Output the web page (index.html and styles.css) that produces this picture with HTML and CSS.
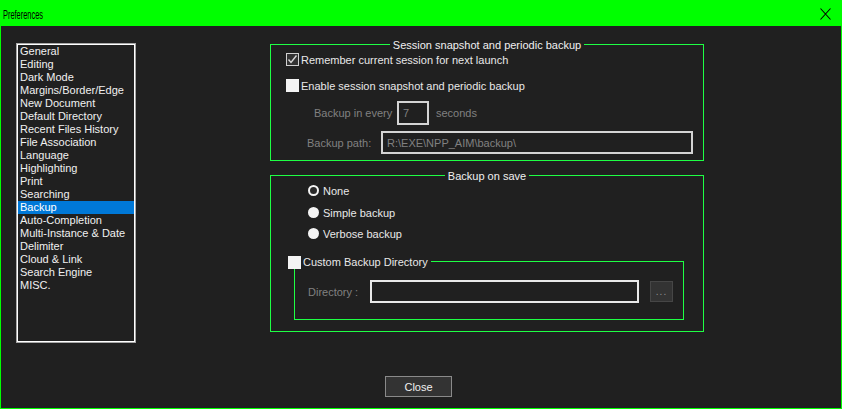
FILE: index.html
```html
<!DOCTYPE html>
<html>
<head>
<meta charset="utf-8">
<title>Preferences</title>
<link rel="stylesheet" href="styles.css">
</head>
<body>
<div class="window">
  <div class="titlebar">
    <span class="title">Preferences</span>
    <svg class="close-x" width="11" height="12" viewBox="0 0 11 12"><path d="M0.5 0.5 L10.5 11.5 M10.5 0.5 L0.5 11.5" stroke="#000" stroke-width="1.1" fill="none"/></svg>
  </div>
  <div class="body">
    <div class="main">
      <ul class="cats">
        <li>General</li>
        <li>Editing</li>
        <li>Dark Mode</li>
        <li>Margins/Border/Edge</li>
        <li>New Document</li>
        <li>Default Directory</li>
        <li>Recent Files History</li>
        <li>File Association</li>
        <li>Language</li>
        <li>Highlighting</li>
        <li>Print</li>
        <li>Searching</li>
        <li class="sel">Backup</li>
        <li>Auto-Completion</li>
        <li>Multi-Instance &amp; Date</li>
        <li>Delimiter</li>
        <li>Cloud &amp; Link</li>
        <li>Search Engine</li>
        <li>MISC.</li>
      </ul>
      <div class="panels">
        <section class="group g1">
          <div class="group-title"><span>Session snapshot and periodic backup</span></div>
          <div class="check-row r1"><span class="cb checked"><svg width="11" height="11" viewBox="0 0 11 11"><path d="M1.5 5.5 L4 8.5 L9.5 1.5" stroke="#d8d8d8" stroke-width="1.4" fill="none"/></svg></span><span>Remember current session for next launch</span></div>
          <div class="check-row r2"><span class="cb"></span><span>Enable session snapshot and periodic backup</span></div>
          <div class="field-row r3"><span class="dim lbl-every">Backup in every</span><span class="input num">7</span><span class="dim lbl-sec">seconds</span></div>
          <div class="field-row r4"><span class="dim lbl-path">Backup path:</span><span class="input path">R:\EXE\NPP_AIM\backup\</span></div>
        </section>
        <section class="group g2">
          <div class="group-title"><span>Backup on save</span></div>
          <div class="radio-row rr1"><span class="rb on"></span><span>None</span></div>
          <div class="radio-row rr2"><span class="rb"></span><span>Simple backup</span></div>
          <div class="radio-row rr3"><span class="rb"></span><span>Verbose backup</span></div>
          <div class="subgroup">
            <div class="sub-head"><span class="cb"></span><span class="sub-label">Custom Backup Directory</span><span class="sub-line"></span></div>
            <div class="field-row dir-row"><span class="dim lbl-dir">Directory :</span><span class="input dir"></span><span class="dots">...</span></div>
          </div>
        </section>
      </div>
    </div>
    <div class="footer"><button class="btn">Close</button></div>
  </div>
</div>
</body>
</html>
```
FILE: styles.css
```css
html, body {
  margin: 0;
  padding: 0;
  background: #202020;
}
body {
  font-family: "Liberation Sans", Arial, sans-serif;
  font-size: 11px;
  color: #e8e8e8;
}
.window {
  width: 842px;
  height: 409px;
  box-sizing: border-box;
  border: 1px solid #00ff00;
  display: flex;
  flex-direction: column;
  background: #202020;
}
.titlebar {
  height: 25px;
  background: #00ff00;
  display: flex;
  align-items: center;
  color: #000;
  font-size: 13px;
}
.title {
  display: inline-block;
  width: 40px;
  margin-left: 2px;
  margin-top: 1px;
  white-space: nowrap;
  transform: scaleX(0.57);
  transform-origin: left center;
}
.close-x {
  margin-left: auto;
  margin-right: 10px;
  margin-top: 1px;
}
.body {
  flex: 1;
  display: flex;
  flex-direction: column;
}
.main {
  display: flex;
  align-items: flex-start;
  padding: 17px 0 0 15px;
}
.cats {
  list-style: none;
  margin: 0;
  padding: 0;
  width: 120px;
  height: 300px;
  box-sizing: border-box;
  border: 1px solid #a8a8a8;
  box-shadow: inset 0 0 0 1px #ffffff;
}
.cats li {
  height: 13px;
  line-height: 13px;
  padding-left: 2px;
  margin: 0 1px;
  white-space: nowrap;
  color: #f0f0f0;
}
.cats li:first-child {
  margin-top: 1px;
}
.cats li.sel {
  background: #0078d7;
  color: #ffffff;
}
.panels {
  margin-left: 134px;
  margin-top: 1px;
  width: 434px;
}
.group {
  display: flex;
  flex-direction: column;
  border: 1px solid #1eff44;
  border-top: 0;
}
.group-title {
  display: flex;
  align-items: center;
  height: 15px;
  margin: -7px -1px 0;
}
.group-title::before,
.group-title::after {
  content: "";
  flex: 1;
  height: 1px;
  background: #1eff44;
}
.group-title span {
  padding: 0 3px;
  white-space: nowrap;
  color: #f0f0f0;
}
.g1 {
  padding-bottom: 6px;
}
.check-row {
  display: flex;
  align-items: center;
  height: 17px;
  padding-left: 15px;
}
.r1 {
  margin-top: -1px;
}
.r2 {
  margin-top: 9px;
}
.cb {
  width: 13px;
  height: 13px;
  box-sizing: border-box;
  background: #f4f4f4;
  margin-right: 2px;
  flex: none;
  display: flex;
  align-items: center;
  justify-content: center;
}
.cb.checked {
  background: #333333;
  border: 1px solid #d0d0d0;
}
.field-row {
  display: flex;
  align-items: center;
}
.dim {
  color: #808080;
  white-space: nowrap;
}
.input {
  box-sizing: border-box;
  border: 2px solid #d4d4d4;
  color: #808080;
  display: flex;
  align-items: center;
  padding-left: 4px;
  flex: none;
}
.r3 {
  margin-top: 7px;
  height: 24px;
}
.lbl-every {
  margin-left: 43px;
  width: 83px;
}
.num {
  width: 32px;
  height: 24px;
}
.lbl-sec {
  margin-left: 7px;
}
.r4 {
  margin-top: 6px;
  height: 23px;
}
.lbl-path {
  margin-left: 36px;
  width: 74px;
}
.path {
  width: 312px;
  height: 23px;
}
.g2 {
  margin-top: 14px;
  padding-bottom: 11px;
}
.radio-row {
  display: flex;
  align-items: center;
  height: 17px;
  padding-left: 37px;
}
.rr1 {
  margin-top: -1px;
}
.rr2 {
  margin-top: 5px;
}
.rr3 {
  margin-top: 4px;
}
.rb {
  width: 11px;
  height: 11px;
  border-radius: 50%;
  background: #f4f4f4;
  box-sizing: border-box;
  margin-right: 4px;
  flex: none;
}
.rb.on {
  background: #2a2a2a;
  border: 2.5px solid #f4f4f4;
}
.subgroup {
  margin: 19px 0 0 23px;
  width: 390px;
  box-sizing: border-box;
  border: 1px solid #1eff44;
  border-top: 0;
  display: flex;
  flex-direction: column;
  padding-bottom: 16px;
}
.sub-head {
  display: flex;
  align-items: flex-start;
  height: 13px;
  margin: -5px 0 0 -7px;
}
.sub-head .cb {
  margin-right: 2px;
}
.sub-label {
  white-space: nowrap;
  line-height: 13px;
  padding-right: 3px;
}
.sub-line {
  flex: 1;
  height: 1px;
  margin-top: 5px;
  background: #1eff44;
}
.dir-row {
  margin-top: 11px;
  height: 23px;
}
.lbl-dir {
  margin-left: 13px;
  width: 62px;
}
.dir {
  width: 269px;
  height: 23px;
  border-color: #e8e8e8;
}
.dots {
  width: 23px;
  height: 21px;
  box-sizing: border-box;
  margin-left: 11px;
  background: #333333;
  border: 1px solid #464646;
  color: #909090;
  font-size: 10px;
  display: flex;
  align-items: center;
  justify-content: center;
  letter-spacing: 1px;
}
.footer {
  margin-top: 33px;
  padding-left: 384px;
}
.btn {
  width: 67px;
  height: 21px;
  box-sizing: border-box;
  background: #333333;
  border: 1px solid #8a8a8a;
  color: #f0f0f0;
  font-family: "Liberation Sans", Arial, sans-serif;
  font-size: 11px;
  padding: 0;
  margin: 0;
}
```
